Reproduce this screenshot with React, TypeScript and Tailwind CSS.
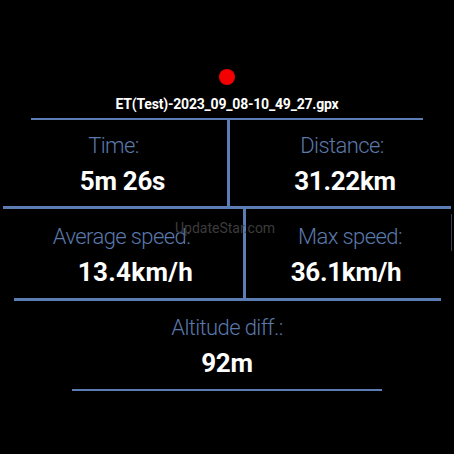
const LINE = 'bg-[#5b7db3]';

function Stat({
  label,
  value,
  className = '',
  valueClass = '',
}: {
  label: string;
  value: string;
  className?: string;
  valueClass?: string;
}) {
  return (
    <div className={`flex flex-col items-center ${className}`}>
      <div className="text-[22px] leading-none font-light text-[#5a78aa] tracking-[-0.6px]">{label}</div>
      <div className={`mt-[11px] text-[26px] leading-none font-bold text-white tracking-[-0.3px] ${valueClass}`}>
        {value}
      </div>
    </div>
  );
}

export default function App() {
  return (
    <div
      className="relative w-[454px] h-[454px] bg-black overflow-hidden flex flex-col items-center pt-[69px]"
      style={{ fontFamily: 'Roboto, "Noto Sans", sans-serif' }}
    >
      <div className="w-4 h-4 rounded-full bg-[#f40000]" />
      <div className="mt-[12px] text-[14px] leading-none font-bold text-white tracking-[-0.2px]">
        ET(Test)-2023_09_08-10_49_27.gpx
      </div>

      <div className={`mt-[7px] w-[392px] h-[2px] ${LINE}`} />

      <div className="w-full h-[86px] flex">
        <Stat label="Time:" value="5m 26s" className="w-[227px] pt-[15px]" valueClass="ml-[18px]" />
        <div className={`w-[3px] ${LINE}`} />
        <Stat label="Distance:" value="31.22km" className="flex-1 pt-[15px]" valueClass="ml-[6px]" />
      </div>

      <div className={`w-[448px] h-[3px] ${LINE}`} />

      <div className="relative w-full h-[89px] flex">
        <Stat label="Average speed:" value="13.4km/h" className="w-[243px] pt-[17px]" valueClass="ml-[28px] tracking-[0.3px]" />
        <div className={`w-[3px] ${LINE}`} />
        <Stat label="Max speed:" value="36.1km/h" className="flex-1 pt-[17px]" valueClass="mr-[8px]" />
        <div className="absolute right-[2px] top-[5px] w-px h-[37px] bg-[#3a3f48]" />
        <div className="absolute left-[175px] top-[12px] text-[14px] leading-none text-[#3c3c3c]">UpdateStar.com</div>
      </div>

      <div className={`w-[427px] h-[3px] ${LINE}`} />

      <Stat label="Altitude diff.:" value="92m" className="pt-[16px]" />

      <div className={`mt-[13px] w-[310px] h-[2px] ${LINE}`} />
    </div>
  );
}
